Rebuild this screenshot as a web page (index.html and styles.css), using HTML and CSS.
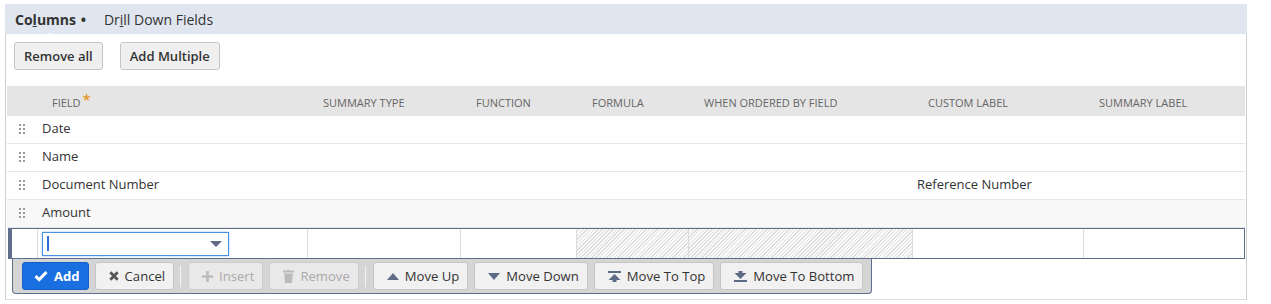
FILE: index.html
```html
<!DOCTYPE html>
<html>
<head>
<meta charset="utf-8">
<link rel="stylesheet" href="styles.css">
</head>
<body>
<div class="wrap">
  <div class="tabs">
    <div class="tab active">Co<u>l</u>umns <span class="dot">•</span></div>
    <div class="tab">Dr<u>i</u>ll Down Fields</div>
  </div>
  <div class="panel">
    <div class="toolbar">
      <button class="btn">Remove all</button>
      <button class="btn">Add Multiple</button>
    </div>
    <div class="grid">
      <div class="row head">
        <div class="c"></div>
        <div class="c first">FIELD<span class="req">*</span></div>
        <div class="c">SUMMARY TYPE</div>
        <div class="c">FUNCTION</div>
        <div class="c">FORMULA</div>
        <div class="c">WHEN ORDERED BY FIELD</div>
        <div class="c">CUSTOM LABEL</div>
        <div class="c">SUMMARY LABEL</div>
      </div>
      <div class="row data">
        <div class="c"><span class="handle"></span></div>
        <div class="c">Date</div><div class="c"></div><div class="c"></div><div class="c"></div><div class="c"></div><div class="c"></div><div class="c"></div>
      </div>
      <div class="row data">
        <div class="c"><span class="handle"></span></div>
        <div class="c">Name</div><div class="c"></div><div class="c"></div><div class="c"></div><div class="c"></div><div class="c"></div><div class="c"></div>
      </div>
      <div class="row data">
        <div class="c"><span class="handle"></span></div>
        <div class="c">Document Number</div><div class="c"></div><div class="c"></div><div class="c"></div><div class="c"></div><div class="c">Reference Number</div><div class="c"></div>
      </div>
      <div class="row data alt">
        <div class="c"><span class="handle"></span></div>
        <div class="c">Amount</div><div class="c"></div><div class="c"></div><div class="c"></div><div class="c"></div><div class="c"></div><div class="c"></div>
      </div>
      <div class="row edit">
        <div class="c"></div>
        <div class="c">
          <div class="select">
            <span class="caret"></span>
            <svg class="dd" width="12" height="6" viewBox="0 0 12 6"><path d="M0 0H12L6 6Z" fill="#5d6b86"/></svg>
          </div>
        </div>
        <div class="c"></div>
        <div class="c"></div>
        <div class="c hatch"></div>
        <div class="c hatch"></div>
        <div class="c"></div>
        <div class="c"></div>
      </div>
    </div>
    <div class="actions">
      <button class="btn primary"><svg width="14" height="12" viewBox="0 0 14 12"><path d="M1.5 6.2L5.2 9.6L12.5 2" fill="none" stroke="#fff" stroke-width="3"/></svg>Add</button>
      <button class="btn"><svg width="10" height="10" viewBox="0 0 10 10"><path d="M1.3 1.3L8.7 8.7M8.7 1.3L1.3 8.7" stroke="#555" stroke-width="2.8"/></svg>Cancel</button>
      <span class="sep"></span>
      <button class="btn disabled"><svg width="11" height="11" viewBox="0 0 11 11"><path d="M5.5 0V11M0 5.5H11" stroke="#bbb" stroke-width="2.6"/></svg>Insert</button>
      <button class="btn disabled"><svg width="11" height="13" viewBox="0 0 11 13"><path d="M0 1.5H11M4 0H7" stroke="#bbb" stroke-width="1.8"/><path d="M1.2 3.5H9.8L9 13H2Z" fill="#bbb"/></svg>Remove</button>
      <span class="sep"></span>
      <button class="btn"><svg width="12" height="7" viewBox="0 0 12 7"><path d="M0 7L6 0L12 7Z" fill="#5d6b86"/></svg>Move Up</button>
      <button class="btn"><svg width="12" height="7" viewBox="0 0 12 7"><path d="M0 0L6 7L12 0Z" fill="#5d6b86"/></svg>Move Down</button>
      <button class="btn"><svg width="13" height="11" viewBox="0 0 13 11"><path d="M0 0H13V2H0Z" fill="#5d6b86"/><path d="M0.5 9L6.5 3L12.5 9Z" fill="#5d6b86"/><rect x="4.5" y="7" width="4" height="4" fill="#5d6b86"/></svg>Move To Top</button>
      <button class="btn"><svg width="13" height="11" viewBox="0 0 13 11"><rect x="4.5" y="0" width="4" height="4" fill="#5d6b86"/><path d="M0.5 2L6.5 8L12.5 2Z" fill="#5d6b86"/><path d="M0 9H13V11H0Z" fill="#5d6b86"/></svg>Move To Bottom</button>
    </div>
  </div>
</div>
</body>
</html>
```
FILE: styles.css
```css
* { box-sizing: border-box; }
body {
  margin: 0;
  background: #fff;
  font-family: "Open Sans", "Noto Sans", sans-serif;
  color: #333;
}
.wrap {
  margin: 4px 0 0 5px;
  width: 1242px;
}
.tabs {
  height: 30px;
  background: #e0e6ef;
  display: flex;
  align-items: center;
  padding-left: 10px;
  gap: 18px;
  font-size: 14px;
}
.tab { position: relative; color: #333; }
.tab.active { font-weight: 700; }
.tab .dot { font-weight: 700; margin-left: 1px; }
.tab.active::after {
  content: "";
  position: absolute;
  left: 26px;
  top: 23px;
  border-left: 9px solid transparent;
  border-right: 9px solid transparent;
  border-bottom: 5px solid #fff;
}
.panel {
  border-left: 1px solid #cfcfcf;
  border-right: 1px solid #cfcfcf;
  border-bottom: 1px solid #ddd;
  padding: 8px 1px 5px 1px;
  height: 266px;
}
.toolbar {
  display: flex;
  gap: 17px;
  padding-left: 7px;
  margin-bottom: 16px;
}
.btn {
  font-family: "Open Sans", "Noto Sans", sans-serif;
  font-size: 13px;
  color: #333;
  background: #efefef;
  border: 1px solid #c6c6c6;
  border-radius: 3px;
  height: 28px;
  padding: 0 9px;
  display: inline-flex;
  align-items: center;
  gap: 6px;
  cursor: default;
  white-space: nowrap;
  flex-shrink: 0;
}
.toolbar .btn { font-weight: 600; padding: 0 9px 0 9px; }
.grid { width: 1238px; }
.row {
  display: grid;
  grid-template-columns: 30px 270px 153px 116px 112px 224px 171px 162px;
}
.head {
  height: 30px;
  background: #e5e5e5;
  font-size: 11px;
  color: #666;
  align-items: center;
  padding-top: 2px;
}
.head .c { padding-left: 16px; }
.head .c.first { padding-left: 15px; }
.req { color: #e68a00; font-size: 15px; position: relative; top: -2px; margin-left: 2px; line-height: 0; }
.data {
  height: 28px;
  border-bottom: 1px solid #e6e6e6;
  font-size: 13px;
  align-items: center;
  padding-bottom: 4px;
}
.data.alt { background: #f8f8f8; }
.data .c { padding-left: 5px; white-space: nowrap; }
.data .c:first-child { padding-top: 2px; }
.handle {
  display: block;
  width: 6px;
  height: 10px;
  margin-left: 7px;
  background:
    radial-gradient(circle at 1px 1px, #9a9a9a 0.9px, transparent 1.1px) 0 0 / 4px 4px;
}
.edit {
  height: 31px;
  border-top: 1px solid #5f6e8d;
  border-bottom: 1px solid #5f6e8d;
  margin-left: 1px;
  grid-template-columns: 29px 270px 153px 116px 112px 224px 171px 162px;
}
.edit .c { border-left: 1px solid #dcdcdc; height: 29px; }
.edit .c:first-child { border-left: 4px solid #5f6e8d; }
.edit .c:nth-child(2) { padding: 3px 0 0 4px; }
.hatch {
  background: repeating-linear-gradient(-45deg, #dedede 0 1px, #fafafa 1px 2.6px);
}
.edit .c:last-child { border-right: 1px solid #5f6e8d; }
.select {
  position: relative;
  width: 187px;
  height: 24px;
  border: 1px solid #4a90e2;
  box-shadow: 0 0 2px #8fc0f5;
  background: #fff;
}
.caret {
  position: absolute;
  left: 4px;
  top: 3px;
  width: 2px;
  height: 15px;
  background: #2d6fd6;
}
.dd { position: absolute; right: 6px; top: 8px; }
.actions {
  margin-left: 5px;
  width: max-content;
  height: 35px;
  background: #d5d5d5;
  border: 1px solid #5f6e8d;
  border-top: none;
  border-radius: 0 0 4px 4px;
  display: flex;
  align-items: flex-start;
  padding: 3px 8px 0 9px;
  gap: 6px;
}
.actions .btn { height: 28px; padding: 0 8px 0 13px; gap: 6px; font-size: 13.1px; background: #f1f1f1; }
.actions .btn.primary {
  background: #1a6fe0;
  border-color: #1560c8;
  color: #fff;
  font-weight: 700;
  padding: 0 8px 0 11px;
}
.actions .btn.disabled { color: #aaa; background: #e9e9e9; border-color: #cdcdcd; }
.sep {
  width: 2px;
  height: 21px;
  margin-top: 4px;
  background: linear-gradient(to right, #f2f2f2 1px, transparent 1px);
}
```
